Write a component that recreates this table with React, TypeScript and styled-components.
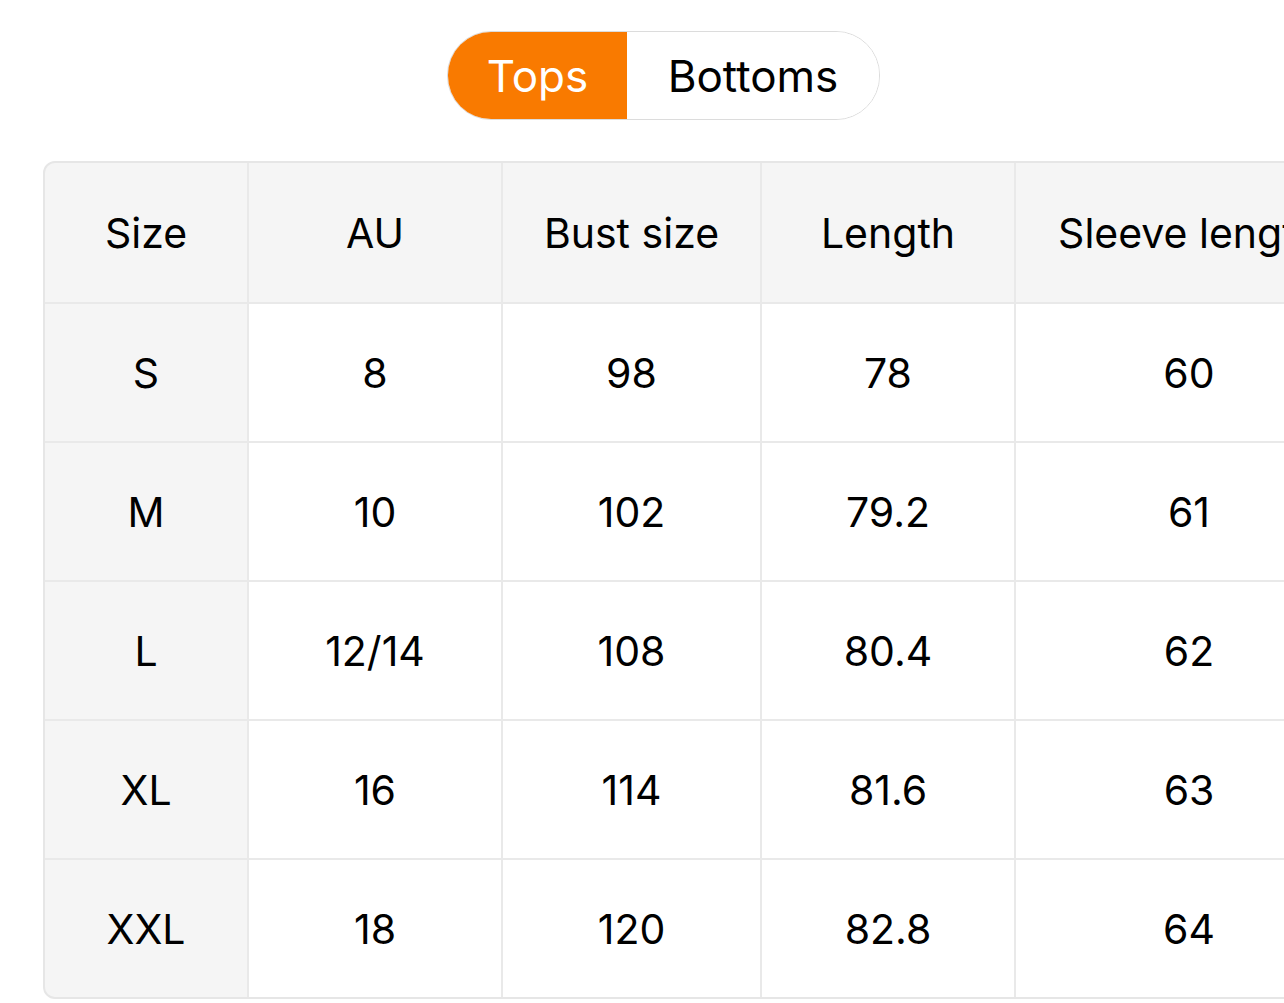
import React, { useState } from "react";
import styled, { createGlobalStyle } from "styled-components";

const GlobalStyle = createGlobalStyle`
  html, body {
    margin: 0;
    padding: 0;
    background: #ffffff;
    overflow: hidden;
  }
  body {
    font-family: Inter, "Noto Sans", "Liberation Sans", sans-serif;
    color: #000;
  }
`;

const Page = styled.div`
  display: flex;
  flex-direction: column;
  padding: 31px 0 0 43px;
  gap: 41px;
`;

const ToggleRow = styled.div`
  display: flex;
  justify-content: center;
`;

const Toggle = styled.div`
  display: flex;
  height: 87px;
  border: 1px solid #dcdcdc;
  border-radius: 44px;
  overflow: hidden;
  background: #fff;
`;

const Segment = styled.button<{ $active: boolean; $w: number }>`
  width: ${(p) => p.$w}px;
  height: 100%;
  border: none;
  margin: 0;
  padding: 0;
  cursor: pointer;
  font-family: inherit;
  font-size: 44px;
  font-weight: 400;
  background: ${(p) => (p.$active ? "#f97a00" : "#ffffff")};
  color: ${(p) => (p.$active ? "#ffffff" : "#000000")};
  display: flex;
  align-items: center;
  justify-content: center;
`;

const TableFrame = styled.div`
  display: grid;
  grid-template-columns: 202px 252px 257px 252px 346px;
  grid-auto-rows: 137px;
  grid-template-rows: 139px;
  gap: 2px;
  width: max-content;
  background: #e9e9e9;
  border: 2px solid #e6e6e6;
  border-radius: 12px;
  overflow: hidden;
`;

const Cell = styled.div<{ $shade: boolean }>`
  display: flex;
  align-items: center;
  justify-content: center;
  background: ${(p) => (p.$shade ? "#f5f5f5" : "#ffffff")};
  font-size: 41px;
  white-space: nowrap;
  overflow: hidden;
  color: #000;
`;

const headers = ["Size", "AU", "Bust size", "Length", "Sleeve length"];
const rows = [
  ["S", "8", "98", "78", "60"],
  ["M", "10", "102", "79.2", "61"],
  ["L", "12/14", "108", "80.4", "62"],
  ["XL", "16", "114", "81.6", "63"],
  ["XXL", "18", "120", "82.8", "64"],
];

export default function App() {
  const [tab, setTab] = useState<"tops" | "bottoms">("tops");
  return (
    <>
      <GlobalStyle />
      <Page>
        <ToggleRow>
          <Toggle>
            <Segment $w={179} $active={tab === "tops"} onClick={() => setTab("tops")}>
              Tops
            </Segment>
            <Segment $w={252} $active={tab === "bottoms"} onClick={() => setTab("bottoms")}>
              Bottoms
            </Segment>
          </Toggle>
        </ToggleRow>
        <TableFrame>
          {headers.map((h) => (
            <Cell key={h} $shade>
              {h}
            </Cell>
          ))}
          {rows.map((r) =>
            r.map((v, i) => (
              <Cell key={r[0] + i} $shade={i === 0}>
                {v}
              </Cell>
            ))
          )}
        </TableFrame>
      </Page>
    </>
  );
}
